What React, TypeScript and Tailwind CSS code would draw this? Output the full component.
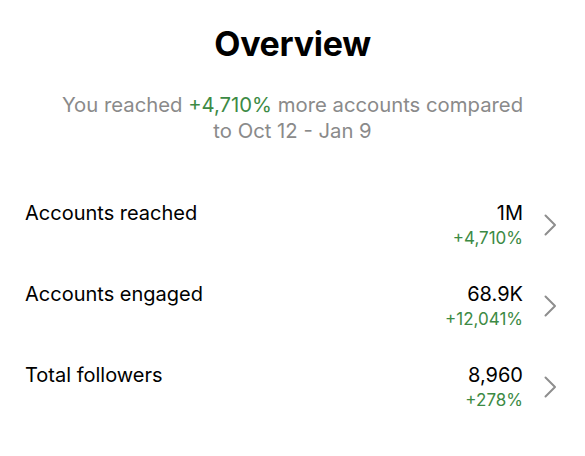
const ROWS = [
  { label: "Accounts reached", value: "1M", change: "+4,710%" },
  { label: "Accounts engaged", value: "68.9K", change: "+12,041%" },
  { label: "Total followers", value: "8,960", change: "+278%" },
];

function Chevron() {
  return (
    <svg width="13" height="22" viewBox="0 0 13 22" fill="none" className="mt-[14px] ml-[21px] shrink-0">
      <polyline points="1.5,1.5 11,11 1.5,20.5" stroke="#8e8e8e" strokeWidth="2" strokeLinecap="round" strokeLinejoin="round" />
    </svg>
  );
}

export default function App() {
  return (
    <div className="w-[585px] h-[456px] bg-white text-black font-['Inter',sans-serif]">
      <div className="pt-[23px] text-center">
        <h1 className="text-[34px] font-bold leading-[42px] tracking-[-0.3px]">Overview</h1>
        <p className="mt-[27px] text-[20.3px] leading-[26px] text-[#8a8a8a]">
          You reached <span className="text-[#3c8a44]">+4,710%</span> more accounts compared
          <br />
          to Oct 12 - Jan 9
        </p>
      </div>

      <div className="mt-[56px] flex flex-col gap-[31px]">
        {ROWS.map((r) => (
          <div key={r.label} className="flex items-start pl-[25px] pr-[28px]">
            <span className="flex-1 text-[20px] leading-[26px]">{r.label}</span>
            <div className="text-right">
              <p className="text-[20px] leading-[26px]">{r.value}</p>
              <p className="text-[17px] leading-[24px] text-[#3c8a44]">{r.change}</p>
            </div>
            <Chevron />
          </div>
        ))}
      </div>
    </div>
  );
}
